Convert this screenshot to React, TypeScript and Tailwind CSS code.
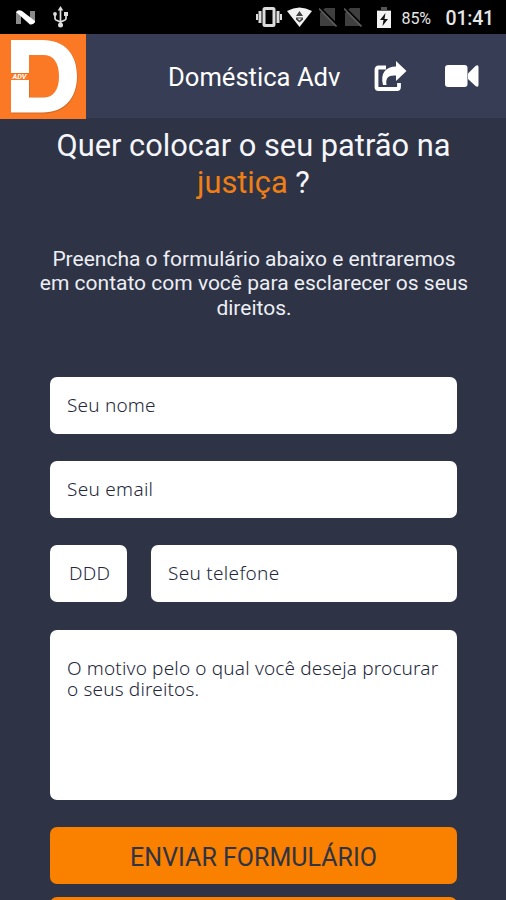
import type { ReactNode } from 'react';

const StatusBar = () => (
  <div className="flex h-[34px] items-center bg-black pr-[12px] pl-[15px] font-[Roboto,sans-serif] text-[#e6e6e6]">
    <svg className="h-[17px] w-[21px]" viewBox="0 0 21 17">
      <path d="M1 3h5v12H1zM15 2h5v12h-5z" fill="#8b8b8b" />
      <path d="M1 3Q3 0 7 2L20 12Q19 16 15 15.500Z" fill="#fff" />
    </svg>
    <svg className="ml-[17px] h-[22px] w-[15px]" viewBox="0 0 15 22" fill="none" stroke="#dedede" strokeWidth="1.7">
      <path d="M7.5 3v16M2 8v4.5q0 1 1 1.5l4.5 2 4.500-2q1-.5 1-1.500V9" />
      <path d="M7.500 0 10.300 4.500H4.700z" fill="#dedede" stroke="none" />
      <circle cx="2" cy="8" r="1.900" fill="#dedede" stroke="none" />
      <path d="M11 6h4v4h-4z" fill="#dedede" stroke="none" />
      <circle cx="7.500" cy="19" r="2.500" fill="#dedede" stroke="none" />
    </svg>

    <div className="ml-auto flex items-center">
      <svg className="h-[20px] w-[28px]" viewBox="0 0 28 20" fill="none" stroke="#dcdcdc">
        <rect x="8" y="1.500" width="10" height="17" rx="1" strokeWidth="3" />
        <path d="M4 4v12M22 4v12" strokeWidth="3" />
        <path d="M1 7v6M25 7v6" strokeWidth="2" />
      </svg>
      <svg className="ml-[3px] h-[20px] w-[25px]" viewBox="0 0 25 20">
        <path d="M0 4Q12.500-3 25 4L12.500 20z" fill="#f2f2f2" />
        <path d="M9 9 12.500 4 16 9zM9 10.500h7v2l-3.500 3-3.500-3z" fill="#444" />
        <path d="M10.500 11.500h4l-2 2z" fill="#eee" />
      </svg>
      {[0, 1].map((sim) => (
        <svg key={sim} className="ml-[7px] h-[20px] w-[18px]" viewBox="0 0 18 20">
          <path d="M6 1h10v18H1V6z" fill="#3f3f3f" />
          <path d="M0 0 18 18" stroke="#000" strokeWidth="2.500" />
          <path d="M0 1.500 17.500 19.500" stroke="#5c5c5c" strokeWidth="1.600" />
        </svg>
      ))}
      <svg className="ml-[15px] h-[21px] w-[14px]" viewBox="0 0 14 21">
        <path d="M4 0h6v3h4v5H0V3h4z" fill="#555" />
        <path d="M0 4h14v17H0z" fill="#f2f2f2" />
        <path d="M8.500 6 3 13h3.500L5.500 19l5.500-7H7.500z" fill="#111" />
      </svg>
      <span className="ml-[11px] w-[32px] pt-[3px] text-[16px] leading-none tracking-[-0.1px] whitespace-nowrap">85%</span>
      <span className="ml-[12px] pt-[3px] text-[19.5px] leading-none font-medium tracking-[-0.2px] whitespace-nowrap">01:41</span>
    </div>
  </div>
);

const Logo = () => (
  <svg className="h-[85px] w-[86px]" viewBox="0 0 86 85">
    <path d="M0 0h86v85H0z" fill="#fb7824" />
    <path
      fill="#d06a27"
      d="M11.700 6.700h31.500c22 0 34.500 14 34.500 36S65 79.500 43.200 79.500H11.700V46.500h18v16.500h14c10.500 0 16-7 16-20.500S53.500 20.500 43.700 20.500H29v19H11.700z"
    />
    <path
      fill="#fff"
      d="M11 6h31.500C64.500 6 77 20 77 42S64.500 78.500 42.500 78.500H11V46h18v17.500h14c10.500 0 16-7.500 16-21.300S53.500 21 43 21H29v18H11z"
    />
    <text x="12.500" y="45.200" fill="#fff" fontFamily="Roboto, sans-serif" fontSize="7.300" fontWeight="700" fontStyle="italic">
      ADV
    </text>
  </svg>
);

const ShareIcon = () => (
  <svg className="h-[32px] w-[34px]" viewBox="0 0 34 32">
    <path
      d="M13 7.500H5.500q-2 0-2 2v17.500q0 2 2 2h18.500q2 0 2-2V23"
      fill="none"
      stroke="#fff"
      strokeWidth="3.800"
    />
    <path d="M23 1v5.500C13 6.500 7 13 10 25h3.500C12.500 18 15 15 23 15.500V21L33.500 11z" fill="#fff" />
  </svg>
);

const VideoIcon = () => (
  <svg className="h-[22px] w-[34px]" viewBox="0 0 34 22">
    <rect width="22.500" height="22" rx="3" fill="#fff" />
    <path d="M23 8.500 30.500 1Q33.500-1 33.500 2.500v17Q33.500 23 30.500 21L23 14z" fill="#fff" />
  </svg>
);

const Field = ({ children, className = 'pl-[17px]' }: { children: ReactNode; className?: string }) => (
  <div className={`flex h-[57px] items-center rounded-[7px] bg-white ${className}`}>{children}</div>
);

export default function App() {
  return (
    <div className="h-[900px] overflow-hidden bg-[#2e3346] font-[Roboto,sans-serif]">
      <StatusBar />

      <header className="flex h-[85px] items-center border-b border-[#30364a] bg-[#373d54] text-white">
        <Logo />
        <h1 className="ml-[82px] w-[174px] pt-[3px] text-[25.6px] whitespace-nowrap">Doméstica Adv</h1>
        <div className="ml-[31px]">
          <ShareIcon />
        </div>
        <div className="ml-[38px]">
          <VideoIcon />
        </div>
      </header>

      <main>
        <h2 className="mt-[8px] pl-px text-center text-[30.8px] leading-[37px] text-[#f5f6fa]">
          Quer colocar o seu patrão na
          <br />
          <span className="text-[#ef7f13]">justiça</span> ?
        </h2>

        <p className="mt-[45.500px] pl-[2px] text-center text-[21px] leading-[24.7px] text-[#eceef4]">
          Preencha o formulário abaixo e entraremos
          <br />
          em contato com você para esclarecer os seus
          <br />
          direitos.
        </p>

        <form className="mt-[56px] ml-[50px] flex w-[407px] flex-col gap-[27.3px] font-['Noto_Sans',sans-serif] text-[19px] text-[#25283b]">
          <Field className="pl-[17px] font-light tracking-[0.2px]">Seu nome</Field>
          <Field className="pl-[17px] font-light tracking-[0.3px]">Seu email</Field>
          <div className="flex gap-[24px] font-light tracking-[0.3px]">
            <Field className="w-[77px] pl-[19px]">DDD</Field>
            <Field className="flex-1 pl-[17px]">Seu telefone</Field>
          </div>
          <div className="h-[170px] rounded-[7px] bg-white pt-[28px] pl-[17px] leading-[21px] font-light tracking-[0.16px] whitespace-nowrap">
            O motivo pelo o qual você deseja procurar
            <br />o seus direitos.
          </div>
          <button
            type="button"
            className="h-[57px] rounded-[7px] bg-[#fa8000] pt-[4px] font-[Roboto,sans-serif] text-[25px] leading-none font-normal text-[#2e3346]"
          >
            ENVIAR FORMULÁRIO
          </button>
          <div className="-mt-[14px] h-[57px] rounded-[7px] bg-[#fa8000]" />
        </form>
      </main>
    </div>
  );
}
